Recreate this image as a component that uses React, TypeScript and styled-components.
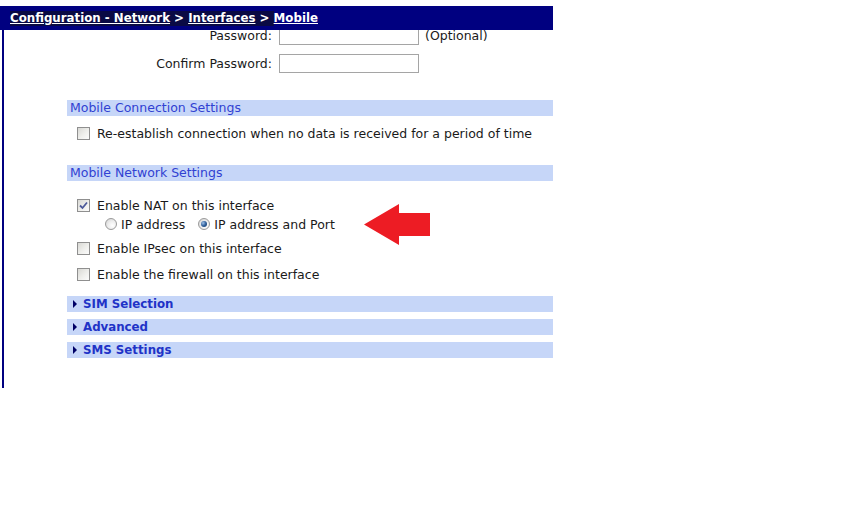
import React from "react";
import styled, { createGlobalStyle } from "styled-components";

const Global = createGlobalStyle`
  html, body { margin: 0; padding: 0; background: #fff; }
  body { font-family: "DejaVu Sans", Verdana, sans-serif; font-size: 12.5px; color: #1a1a1a; }
`;

const Page = styled.div`
  position: relative;
  width: 854px;
  height: 526px;
  padding-top: 30px;
  box-sizing: border-box;
  background: #fff;
`;

const TitleBar = styled.div`
  position: absolute;
  top: 6px;
  left: 0;
  width: 553px;
  height: 24px;
  background: #000080;
  display: flex;
  align-items: center;
  padding-left: 10px;
  box-sizing: border-box;
  font-weight: bold;
  font-size: 11.8px;
  color: #fff;
  z-index: 2;
`;

const Crumbs = styled.span<{ $dark?: boolean }>`
  background: ${(p) => (p.$dark ? "#0a0a44" : "transparent")};
  line-height: 15px;
  white-space: pre;
`;

const Link = styled.a`
  color: #fff;
  text-decoration: underline;
`;

const Frame = styled.div`
  margin-left: 2px;
  height: 358px;
  border-left: 2px solid #000080;
  overflow: hidden;
`;

const Scrolled = styled.div`
  margin-top: -4px;
  display: flex;
  flex-direction: column;
`;

const FieldRow = styled.div<{ $mb?: number }>`
  display: grid;
  grid-template-columns: 268px 140px auto;
  column-gap: 7px;
  align-items: center;
  height: 19px;
  margin-bottom: ${(p) => p.$mb ?? 0}px;
`;

const Label = styled.label`
  text-align: right;
  white-space: nowrap;
`;

const TextInput = styled.input`
  box-sizing: border-box;
  width: 140px;
  height: 19px;
  border: 1px solid #a5a5a5;
  background: #fff;
  padding: 0;
  margin: 0;
`;

const Hint = styled.span`
  margin-left: -1px;
`;

const SectionBar = styled.div<{ $mt: number }>`
  margin: ${(p) => p.$mt}px 0 0 63px;
  width: 486px;
  height: 16px;
  background: #c6d6f8;
  color: #3041d2;
  display: flex;
  align-items: center;
  padding-left: 3px;
  box-sizing: border-box;
  line-height: 16px;
`;

const CollapseBar = styled(SectionBar)`
  font-weight: bold;
  font-size: 11.8px;
  color: #1f33c7;
  padding-left: 6px;
  gap: 6px;
`;

const Tri = styled.span`
  width: 0;
  height: 0;
  border-top: 4px solid transparent;
  border-bottom: 4px solid transparent;
  border-left: 4px solid #000066;
`;

const OptionRow = styled.div<{ $mt: number; $indent?: number }>`
  margin: ${(p) => p.$mt}px 0 0 ${(p) => p.$indent ?? 73}px;
  display: flex;
  align-items: center;
  height: 18px;
  white-space: nowrap;
`;

const BoxWrap = styled.span`
  width: 13px;
  height: 13px;
  box-sizing: border-box;
  border: 1px solid #8f8f8f;
  background: linear-gradient(135deg, #d8d8d4 0%, #efefec 55%, #fbfbfb 100%);
  display: inline-flex;
  align-items: center;
  justify-content: center;
  margin-right: 7px;
  flex: none;
`;

const RadioWrap = styled.span`
  width: 12px;
  height: 12px;
  box-sizing: border-box;
  border-radius: 50%;
  border: 1px solid #9a9a9a;
  background: radial-gradient(circle at 65% 65%, #ffffff 0%, #eeeeee 45%, #cfcfcf 100%);
  display: inline-flex;
  align-items: center;
  justify-content: center;
  margin-right: 4px;
  flex: none;
`;

const Dot = styled.span`
  width: 6px;
  height: 6px;
  border-radius: 50%;
  background: radial-gradient(circle at 35% 35%, #9fc1e8 0%, #2f5f9a 50%, #183a66 100%);
`;

const RadioGroup = styled.span`
  display: inline-flex;
  align-items: center;
  margin-right: 13px;
`;

const Arrow = styled.svg`
  position: absolute;
  left: 364px;
  top: 204px;
  z-index: 1;
`;

function Check({ on }: { on?: boolean }) {
  return (
    <BoxWrap>
      {on && (
        <svg width="9" height="9" viewBox="0 0 9 9">
          <path d="M1 4.5 L3.5 7 L8 1.5" fill="none" stroke="#4d5a9a" strokeWidth="1.8" />
        </svg>
      )}
    </BoxWrap>
  );
}

function Radio({ on }: { on?: boolean }) {
  return <RadioWrap>{on && <Dot />}</RadioWrap>;
}

export default function App() {
  return (
    <Page>
      <Global />
      <TitleBar>
        <Crumbs $dark>
          <Link>Configuration - Network</Link>{" > "}<Link>Interfaces</Link>{" > "}
        </Crumbs>
        <Crumbs>
          <Link>Mobile</Link>
        </Crumbs>
      </TitleBar>
      <Frame>
        <Scrolled>
          <FieldRow $mb={9}>
            <Label>Password:</Label>
            <TextInput type="password" />
            <Hint>(Optional)</Hint>
          </FieldRow>
          <FieldRow>
            <Label>Confirm Password:</Label>
            <TextInput type="password" />
            <span />
          </FieldRow>
          <SectionBar $mt={27}>Mobile Connection Settings</SectionBar>
          <OptionRow $mt={8}>
            <Check />
            Re-establish connection when no data is received for a period of time
          </OptionRow>
          <SectionBar $mt={23}>Mobile Network Settings</SectionBar>
          <OptionRow $mt={15}>
            <Check on />
            Enable NAT on this interface
          </OptionRow>
          <OptionRow $mt={1} $indent={101}>
            <RadioGroup>
              <Radio />
              IP address
            </RadioGroup>
            <RadioGroup>
              <Radio on />
              IP address and Port
            </RadioGroup>
          </OptionRow>
          <OptionRow $mt={6}>
            <Check />
            Enable IPsec on this interface
          </OptionRow>
          <OptionRow $mt={8}>
            <Check />
            Enable the firewall on this interface
          </OptionRow>
          <CollapseBar $mt={13}>
            <Tri />
            SIM Selection
          </CollapseBar>
          <CollapseBar $mt={7}>
            <Tri />
            Advanced
          </CollapseBar>
          <CollapseBar $mt={7}>
            <Tri />
            SMS Settings
          </CollapseBar>
        </Scrolled>
      </Frame>
      <Arrow width="67" height="42" viewBox="0 0 67 42">
        <path d="M0 20.5 L35 0 L35 9 L66 9 L66 32 L35 32 L35 41 Z" fill="#ed1c24" />
      </Arrow>
    </Page>
  );
}
